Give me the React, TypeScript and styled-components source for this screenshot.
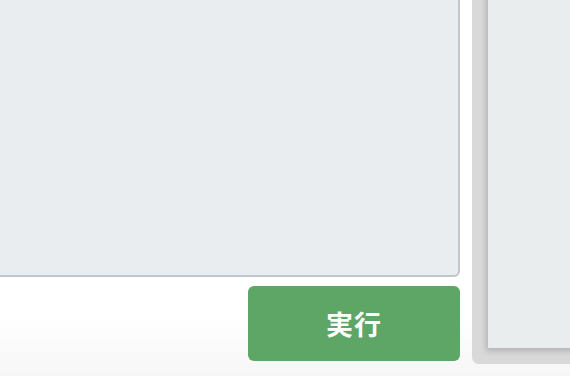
import styled, { createGlobalStyle } from 'styled-components'

const GlobalStyle = createGlobalStyle`
  html, body {
    margin: 0;
    padding: 0;
    height: 100%;
    overflow: hidden;
  }
  body {
    background: linear-gradient(to bottom, #ffffff 0, #ffffff 320px, #f6f6f6 376px);
    font-family: "Noto Sans CJK JP", "Noto Sans", sans-serif;
  }
`

export default function App() {
  return (
    <>
      <GlobalStyle />
      <Viewport>
        <Layout>
          <Editor>
            <CodeArea spellCheck={false} defaultValue="" />
            <Actions>
              <RunButton type="button">実行</RunButton>
            </Actions>
          </Editor>
          <OutputFrame>
            <OutputSheet />
          </OutputFrame>
        </Layout>
      </Viewport>
    </>
  )
}

const Viewport = styled.div`
  width: 570px;
  height: 376px;
  overflow: hidden;
`

const Layout = styled.div`
  display: flex;
  align-items: flex-start;
  gap: 12px;
  margin: -12px 0 0 -12px;
  width: 620px;
  height: 388px;
`

const Editor = styled.div`
  display: flex;
  flex-direction: column;
  gap: 9px;
  width: 472px;
  flex-shrink: 0;
`

const CodeArea = styled.textarea`
  display: block;
  box-sizing: border-box;
  width: 100%;
  height: 289px;
  resize: none;
  background: #e9edef;
  border: 2px solid #c1c6ca;
  border-radius: 6px;
  outline: none;
`

const Actions = styled.div`
  display: flex;
  justify-content: flex-end;
`

const RunButton = styled.button`
  width: 212px;
  height: 75px;
  border: none;
  border-radius: 6px;
  background: #5ea665;
  color: #ffffff;
  font-family: "Noto Sans CJK JP", "Noto Sans", sans-serif;
  font-size: 27px;
  font-weight: 700;
  letter-spacing: 1px;
  cursor: pointer;
`

const OutputFrame = styled.div`
  flex: 1;
  box-sizing: border-box;
  height: 376px;
  padding: 0 0 16px 16px;
  background: #d9d9d9;
  border-radius: 0 0 0 7px;
`

const OutputSheet = styled.div`
  height: 100%;
  background: #e9edee;
  box-shadow: -2px 3px 6px rgba(0, 0, 0, 0.18);
`
